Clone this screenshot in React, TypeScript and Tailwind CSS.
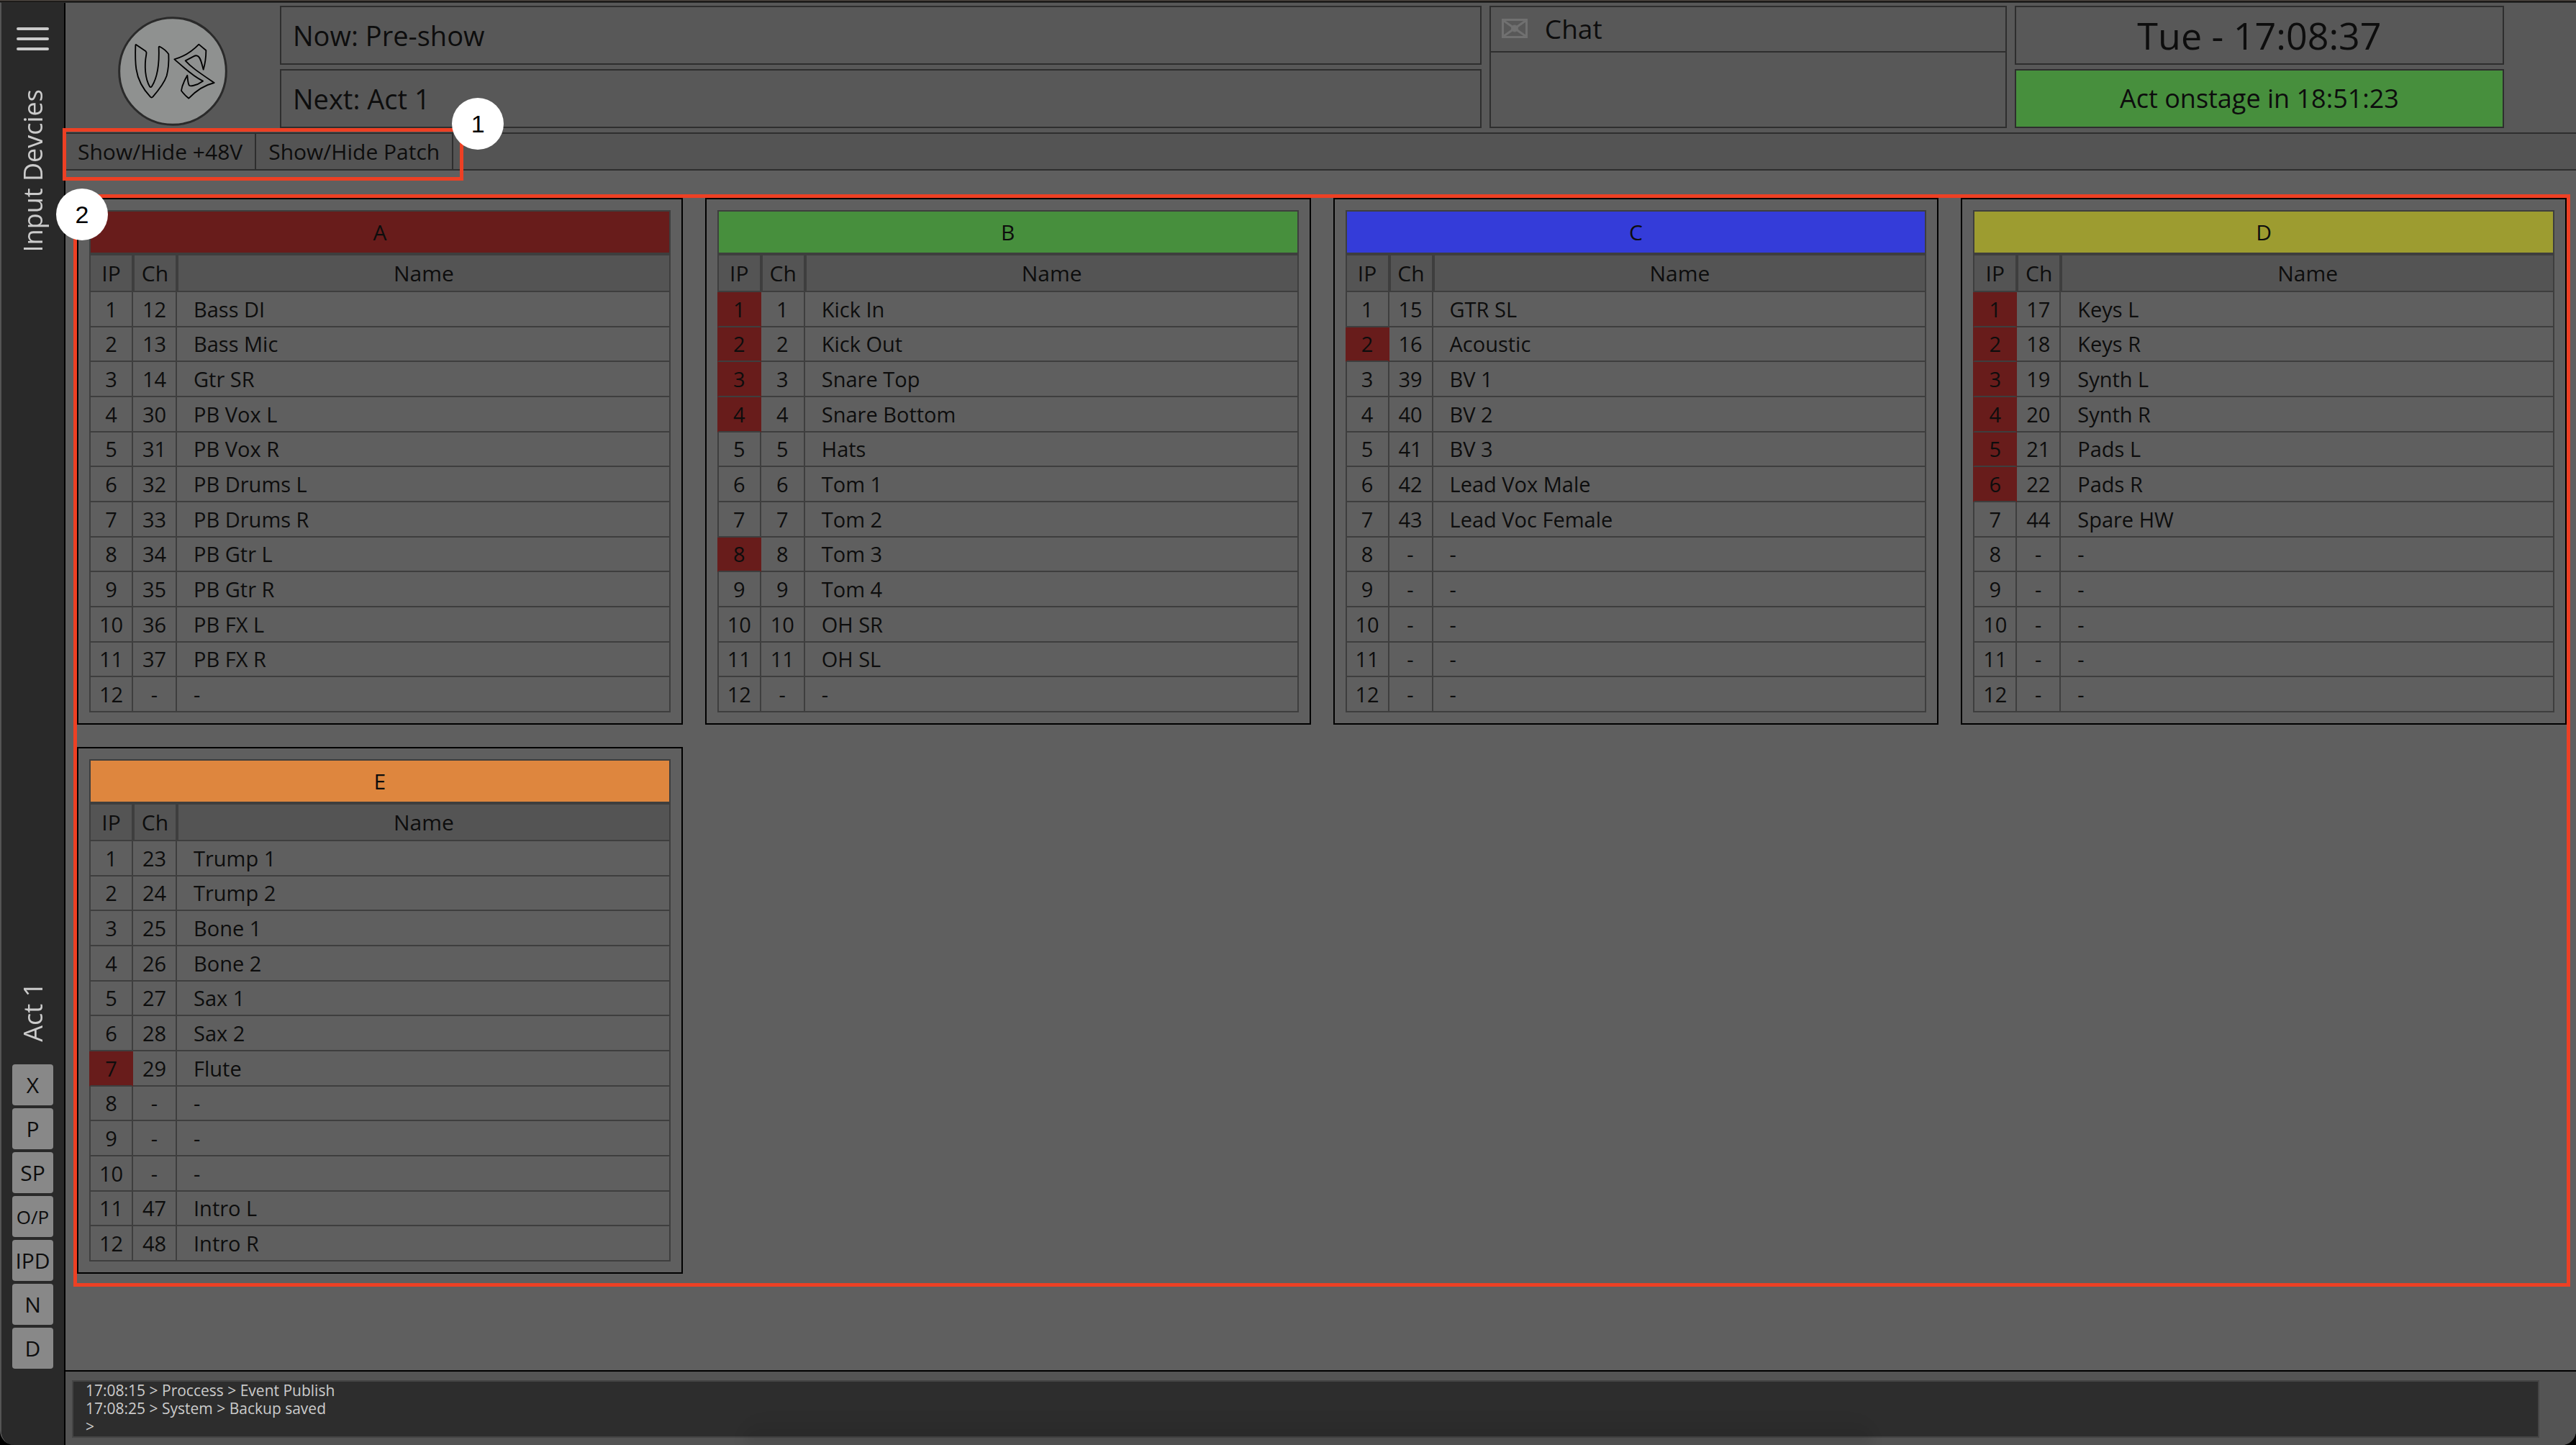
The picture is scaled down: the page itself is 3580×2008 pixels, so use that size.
import React from "react";

type Row = [channel: string, name: string, phantom?: boolean];

interface Device {
  id: string;
  color: string;
  rows: Row[];
}

const EMPTY: Row = ["-", "-"];

const devices: Device[] = [
  {
    id: "A",
    color: "bg-[#681c1b]",
    rows: [
      ["12", "Bass DI"],
      ["13", "Bass Mic"],
      ["14", "Gtr SR"],
      ["30", "PB Vox L"],
      ["31", "PB Vox R"],
      ["32", "PB Drums L"],
      ["33", "PB Drums R"],
      ["34", "PB Gtr L"],
      ["35", "PB Gtr R"],
      ["36", "PB FX L"],
      ["37", "PB FX R"],
      EMPTY,
    ],
  },
  {
    id: "B",
    color: "bg-[#478f3d]",
    rows: [
      ["1", "Kick In", true],
      ["2", "Kick Out", true],
      ["3", "Snare Top", true],
      ["4", "Snare Bottom", true],
      ["5", "Hats"],
      ["6", "Tom 1"],
      ["7", "Tom 2"],
      ["8", "Tom 3", true],
      ["9", "Tom 4"],
      ["10", "OH SR"],
      ["11", "OH SL"],
      EMPTY,
    ],
  },
  {
    id: "C",
    color: "bg-[#343cd9]",
    rows: [
      ["15", "GTR SL"],
      ["16", "Acoustic", true],
      ["39", "BV 1"],
      ["40", "BV 2"],
      ["41", "BV 3"],
      ["42", "Lead Vox Male"],
      ["43", "Lead Voc Female"],
      EMPTY,
      EMPTY,
      EMPTY,
      EMPTY,
      EMPTY,
    ],
  },
  {
    id: "D",
    color: "bg-[#9d9c30]",
    rows: [
      ["17", "Keys L", true],
      ["18", "Keys R", true],
      ["19", "Synth L", true],
      ["20", "Synth R", true],
      ["21", "Pads L", true],
      ["22", "Pads R", true],
      ["44", "Spare HW"],
      EMPTY,
      EMPTY,
      EMPTY,
      EMPTY,
      EMPTY,
    ],
  },
  {
    id: "E",
    color: "bg-[#de863e]",
    rows: [
      ["23", "Trump 1"],
      ["24", "Trump 2"],
      ["25", "Bone 1"],
      ["26", "Bone 2"],
      ["27", "Sax 1"],
      ["28", "Sax 2"],
      ["29", "Flute", true],
      EMPTY,
      EMPTY,
      EMPTY,
      ["47", "Intro L"],
      ["48", "Intro R"],
    ],
  },
];

const shortcuts = ["X", "P", "SP", "O/P", "IPD", "N", "D"];

function Logo() {
  return (
    <svg viewBox="45 39 456 456" className="size-[152px]" role="img" aria-label="VS logo">
      <circle cx="273" cy="267" r="223" fill="#8f9190" stroke="#2a2a2a" strokeWidth="9" />
      <g fill="none" stroke="#000" strokeWidth="5.5" strokeLinejoin="round">
        <path d="M120 156 L161 184 Q165 188 163 196 C154 245 158 300 178 332 Q182 336 186 330 C208 296 218 240 215 166 Q216 163 220 165 Q242 176 256 196 C258 235 254 262 248 286 C238 316 216 344 190 374 Q185 379 180 374 C150 342 128 305 121 258 C116 224 117 190 118 160 Q118 156 120 156 Z" />
        <path d="M280 217 C322 206 350 188 382 155 L412 180 C412 208 408 236 401 260 C394 236 390 208 376 203 Q370 200 360 205 L326 223 C350 250 380 270 446 315 C410 324 372 346 340 380 Q322 366 309 348 C312 326 322 304 334 284 C336 300 336 318 342 326 Q346 330 358 327 Q380 322 399 308 C350 284 315 246 280 217 Z" />
      </g>
    </svg>
  );
}

function MailIcon() {
  return (
    <svg viewBox="0 0 36 27" className="h-[27px] w-[36px]" fill="none" stroke="#707070" aria-hidden="true">
      <rect x="1.5" y="1.5" width="33" height="24" strokeWidth="3" />
      <path d="M3 3 L33 24 M33 3 L3 24" strokeWidth="3" />
      <circle cx="18" cy="13.5" r="4.5" fill="#707070" />
    </svg>
  );
}

function Marker({ label, className }: { label: string; className: string }) {
  return (
    <span
      className={`absolute z-10 flex size-[72px] items-center justify-center rounded-full bg-white font-['Liberation_Sans',sans-serif] text-[34px] leading-none text-black ${className}`}
    >
      {label}
    </span>
  );
}

function Sidebar() {
  return (
    <aside className="flex w-[89px] shrink-0 flex-col items-center border-r-2 border-black bg-[#292929] pb-[106px] text-[36px] leading-[48px] text-[#cbcbcb]">
      <button type="button" aria-label="Menu" className="mt-[34px] flex flex-col gap-[10px]">
        <span className="h-1 w-[45px] rounded-full bg-[#cbcbcb]" />
        <span className="h-1 w-[45px] rounded-full bg-[#cbcbcb]" />
        <span className="h-1 w-[45px] rounded-full bg-[#cbcbcb]" />
      </button>
      <h1 className="mt-[54px] rotate-180 [writing-mode:vertical-rl]">Input Devcies</h1>
      <p className="mt-auto rotate-180 [writing-mode:vertical-rl]">Act 1</p>
      <nav className="mt-[31px] flex flex-col gap-1">
        {shortcuts.map((s) => (
          <button
            key={s}
            type="button"
            className={`h-[57px] w-[57px] rounded bg-[#888888] leading-none text-[#0d0d0d] ${
              s === "O/P" ? "text-[26px]" : "text-[30px]"
            }`}
          >
            {s}
          </button>
        ))}
      </nav>
    </aside>
  );
}

function Header() {
  return (
    <header className="flex h-[180px] bg-[#585858] pt-1 pr-[100px] pb-[6px]">
      <div className="flex w-[298px] shrink-0 items-center justify-center pt-[12px]">
        <Logo />
      </div>
      <div className="flex flex-1 gap-[11px]">
        <div className="flex flex-[1672] flex-col gap-[6px] text-[38px]">
          <p className="flex flex-1 items-center border-2 border-[#2e2e2e] px-4">Now: Pre-show</p>
          <p className="flex flex-1 items-center border-2 border-[#2e2e2e] px-4">Next: Act 1</p>
        </div>
        <section className="flex flex-[716] flex-col border-2 border-[#2e2e2e] text-[37px]">
          <h2 className="flex h-[63px] items-center gap-6 border-b-2 border-[#2e2e2e] px-[15px] pb-[2px]">
            <MailIcon />
            Chat
          </h2>
        </section>
        <div className="flex flex-[681] flex-col gap-[6px] text-center">
          <p className="flex flex-1 items-center justify-center border-2 border-[#2e2e2e] text-[52px] leading-none">
            Tue - 17:08:37
          </p>
          <p className="flex flex-1 items-center justify-center border-2 border-[#2e2e2e] bg-[#478f3d] text-[36px]">
            Act onstage in 18:51:23
          </p>
        </div>
      </div>
    </header>
  );
}

function Toolbar() {
  return (
    <div className="flex h-[53px] border-y-2 border-[#2e2e2e] bg-[#545454] text-[30px]">
      <div className="relative flex">
        <button type="button" className="border-r-2 border-[#2e2e2e] px-[17px] leading-none">
          Show/Hide +48V
        </button>
        <button type="button" className="border-r-2 border-[#2e2e2e] px-[17px] leading-none">
          Show/Hide Patch
        </button>
        <div className="pointer-events-none absolute -top-2 -right-[14px] -bottom-4 -left-1 border-[5px] border-[#ed4024]" />
        <Marker label="1" className="-top-[50px] -right-[70px]" />
      </div>
    </div>
  );
}

function DeviceCard({ device }: { device: Device }) {
  return (
    <article className="border-2 border-black p-[15px]">
      <table className="h-[698px] w-full table-fixed border-separate border-spacing-0 text-[29px] leading-none">
        <colgroup>
          <col className="w-[61px]" />
          <col className="w-[61px]" />
          <col />
        </colgroup>
        <thead className="text-[30px]">
          <tr className="h-[61px]">
            <th colSpan={3} className={`border-2 border-[#3e3e3e] p-0 font-normal ${device.color}`}>
              {device.id}
            </th>
          </tr>
          <tr className="h-[53px] bg-[#545454]">
            <th className="border-2 border-[#3e3e3e] p-0 font-normal">IP</th>
            <th className="border-2 border-[#3e3e3e] p-0 font-normal">Ch</th>
            <th className="border-2 border-[#3e3e3e] p-0 font-normal">Name</th>
          </tr>
        </thead>
        <tbody>
          {device.rows.map(([channel, name, phantom], i) => (
            <tr key={i}>
              <td
                className={`border-x-2 border-b-2 border-b-[#3e3e3e] p-0 text-center ${
                  phantom ? "border-x-[#681c1b] bg-[#681c1b]" : "border-x-[#3e3e3e]"
                }`}
              >
                {i + 1}
              </td>
              <td className="border-r-2 border-b-2 border-[#3e3e3e] p-0 text-center">{channel}</td>
              <td className="border-r-2 border-b-2 border-[#3e3e3e] py-0 pr-0 pl-[23px]">{name}</td>
            </tr>
          ))}
        </tbody>
      </table>
    </article>
  );
}

function EventLog() {
  return (
    <footer className="relative border-t-2 border-black bg-[#545454] pt-3 pr-[51px] pb-[10px] pl-[9px]">
      <div
        role="log"
        className="h-20 border-2 border-[#454545] bg-[#2d2d2d] px-[17px] text-[21px] leading-[25px] text-[#cbcbcb]"
      >
        <p>17:08:15 &gt; Proccess &gt; Event Publish</p>
        <p>17:08:25 &gt; System &gt; Backup saved</p>
        <p>&gt;</p>
      </div>
      <div className="pointer-events-none absolute right-[28%] bottom-0 left-[27%] h-[40px] rounded-t-[40px] bg-linear-to-t from-black/10 to-transparent blur-sm" />
    </footer>
  );
}

export default function App() {
  return (
    <div className="flex min-h-screen flex-col bg-black font-['Open_Sans',sans-serif] text-[#0d0d0d]">
      <div className="h-[3px] border-b border-black bg-[#403b36]" />
      <div className="flex flex-1 overflow-hidden rounded-b-[20px] border-t border-l-2 border-t-[#333333] border-l-[#555555]">
        <Sidebar />
        <div className="flex min-w-0 flex-1 flex-col bg-[#5f5f5f]">
          <Header />
          <Toolbar />
          <main className="flex-1 pt-[33px] pr-2 pb-6 pl-[11px]">
            <section className="relative border-[5px] border-[#ed4024] pb-[13px]">
              <Marker label="2" className="-top-[13px] -left-[29px]" />
              <div className="grid grid-cols-4 gap-[31px]">
                {devices.map((d) => (
                  <DeviceCard key={d.id} device={d} />
                ))}
              </div>
            </section>
          </main>
          <EventLog />
        </div>
      </div>
    </div>
  );
}
